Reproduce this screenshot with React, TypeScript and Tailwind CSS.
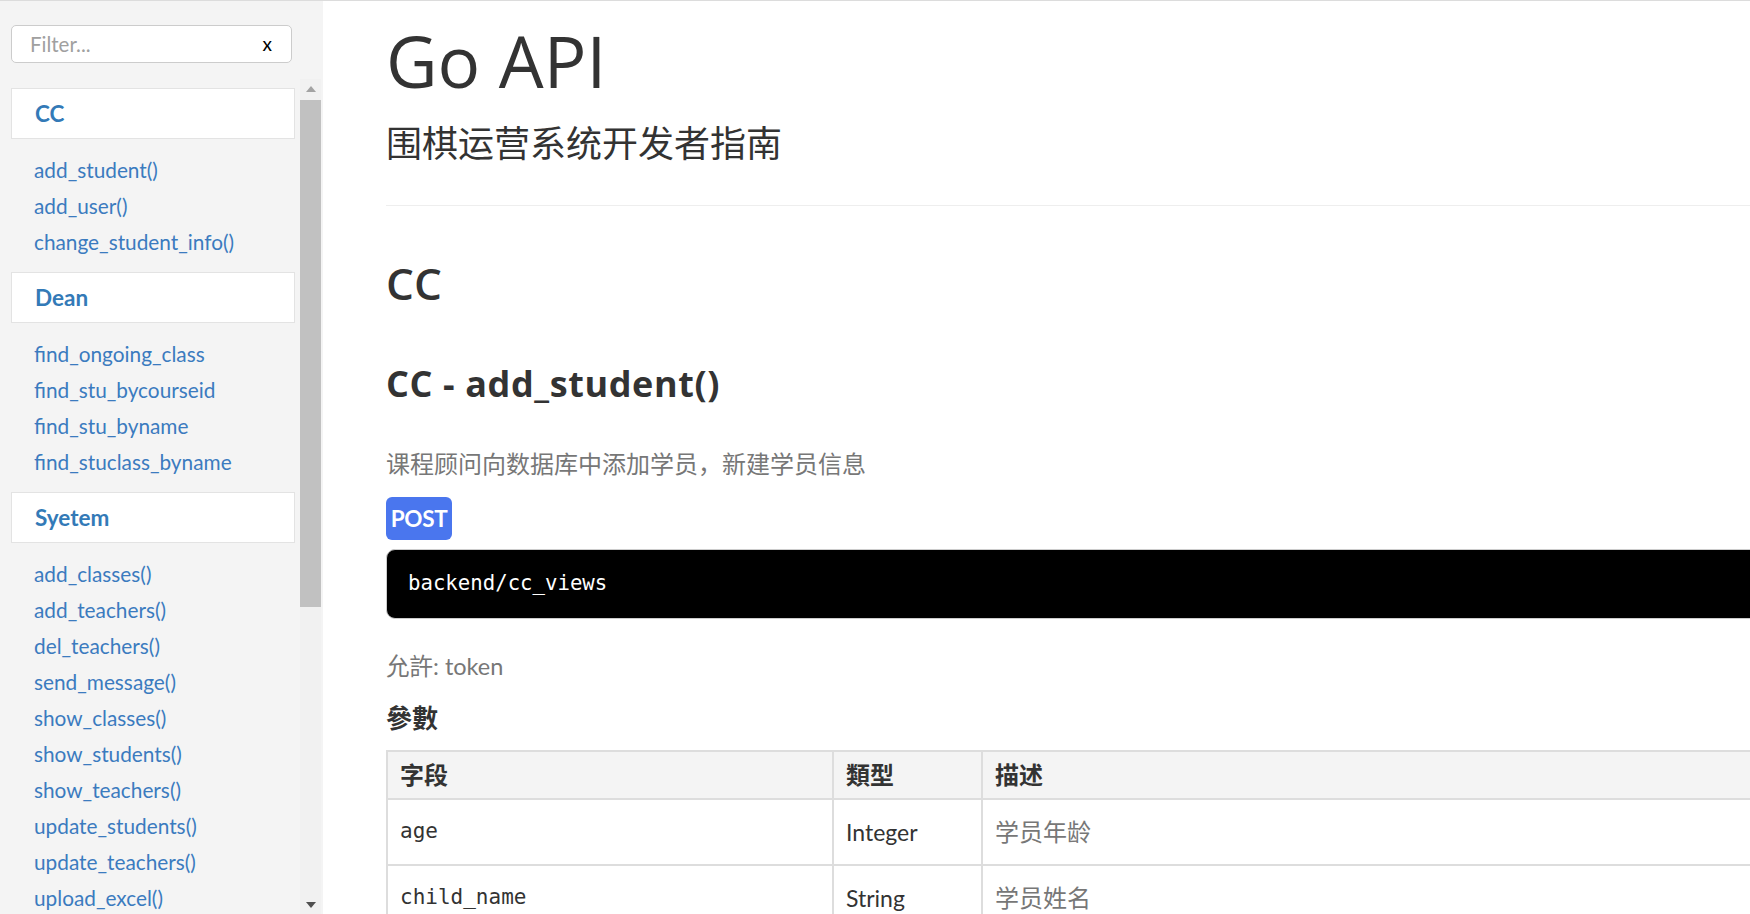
import React from "react";

const sans = "font-['Lato','Noto_Sans_CJK_SC',sans-serif]";
const head = "font-['Open_Sans','Noto_Sans_CJK_SC',sans-serif]";
const mono = "font-['DejaVu_Sans_Mono','Liberation_Mono',monospace]";

const groups = [
  { name: "CC", items: ["add_student()", "add_user()", "change_student_info()"] },
  {
    name: "Dean",
    items: ["find_ongoing_class", "find_stu_bycourseid", "find_stu_byname", "find_stuclass_byname"],
  },
  {
    name: "Syetem",
    items: [
      "add_classes()",
      "add_teachers()",
      "del_teachers()",
      "send_message()",
      "show_classes()",
      "show_students()",
      "show_teachers()",
      "update_students()",
      "update_teachers()",
      "upload_excel()",
    ],
  },
];

const params = [
  { field: "age", type: "Integer", desc: "学员年龄" },
  { field: "child_name", type: "String", desc: "学员姓名" },
];

function Sidebar() {
  return (
    <aside className={`flex w-[323px] shrink-0 flex-col bg-[#f4f4f4] ${sans}`}>
      <div className="ml-[11px] mt-[24px] flex h-[38px] w-[281px] items-center justify-between rounded-[5px] border border-[#ccc] bg-white pl-[18px] pr-[19px]">
        <span className="text-[20.5px] text-[#a0a0a0]">Filter...</span>
        <span className="text-[19px] text-black">x</span>
      </div>
      <div className="mt-[16px] flex min-h-0 flex-1">
        <div className="ml-[11px] w-[284px] pt-[9px]">
          {groups.map((g) => (
            <div key={g.name}>
              <div className="flex h-[51px] items-center border border-[#e3e3e3] bg-white pl-[23px] text-[22.5px] font-bold text-[#337ab7]">
                {g.name}
              </div>
              <ul className="pb-[12px] pt-[13px]">
                {g.items.map((it) => (
                  <li key={it} className="pl-[23px] text-[20.8px] leading-[36px] text-[#3b7bbf]">
                    {it}
                  </li>
                ))}
              </ul>
            </div>
          ))}
        </div>
        {/* scrollbar */}
        <div className="ml-[5px] flex w-[21px] flex-col items-center bg-[#f1f1f1]">
          <svg width="10" height="6" viewBox="0 0 10 6" className="mt-[7px]">
            <path d="M0 6 L5 0 L10 6 Z" fill="#a3a3a3" />
          </svg>
          <div className="mt-[8px] h-[507px] w-full bg-[#c1c1c1]" />
          <div className="flex-1" />
          <svg width="10" height="6" viewBox="0 0 10 6" className="mb-[6px]">
            <path d="M0 0 L10 0 L5 6 Z" fill="#505050" />
          </svg>
        </div>
      </div>
    </aside>
  );
}

function Main() {
  return (
    <main className="min-w-0 flex-1 overflow-hidden bg-white pl-[63px]">
      <div className="w-[1500px] pt-[20px] text-[#333]">
        <h1 className={`${head} text-[71px] leading-[80px]`}>Go API</h1>
        <p className={`${head} mt-[21px] text-[36px] leading-[44px]`}>围棋运营系统开发者指南</p>
        <hr className="mt-[39px] border-t border-[#eee]" />
        <h2 className={`${head} mt-[51px] text-[44px] font-semibold leading-[52px]`}>CC</h2>
        <h3 className={`${head} mt-[53px] text-[36px] font-bold leading-[44px] tracking-[0.6px]`}>
          CC - add_student()
        </h3>
        <p className={`${head} mt-[42px] text-[24px] leading-[32px] text-[#777]`}>
          课程顾问向数据库中添加学员，新建学员信息
        </p>
        <div
          className={`${sans} mt-[17px] flex h-[43px] w-[66px] items-center justify-center rounded-[6px] bg-[#4a76ee] text-[22.5px] font-bold tracking-[-0.3px] text-white`}
        >
          POST
        </div>
        <div className="mt-[9px] flex h-[70px] items-center rounded-[9px] border border-[#ccc] bg-black pl-[21px]">
          <span className={`${mono} text-[20.7px] text-white`}>backend/cc_views</span>
        </div>
        <p className={`${sans} mt-[32px] text-[23.5px] leading-[30px] text-[#777]`}>允許: token</p>
        <h4 className={`${sans} mt-[21px] text-[26px] font-bold leading-[32px]`}>參數</h4>
        <table className={`${sans} mt-[16px] w-full border-collapse border-2 border-[#ddd]`}>
          <thead>
            <tr className="h-[48px] bg-[#f4f4f4]">
              <th className="w-[446px] border-2 border-[#ddd] pl-[12px] text-left text-[24px] font-bold">字段</th>
              <th className="w-[149px] border-2 border-[#ddd] pl-[12px] text-left text-[24px] font-bold">類型</th>
              <th className="border-2 border-[#ddd] pl-[12px] text-left text-[24px] font-bold">描述</th>
            </tr>
          </thead>
          <tbody>
            {params.map((p) => (
              <tr key={p.field} className="h-[66px]">
                <td className={`${mono} border-2 border-[#ddd] pl-[12px] text-[21px]`}>{p.field}</td>
                <td className="border-2 border-[#ddd] pl-[12px] text-[23px]">{p.type}</td>
                <td className="border-2 border-[#ddd] pl-[12px] text-[24px] text-[#777]">{p.desc}</td>
              </tr>
            ))}
          </tbody>
        </table>
      </div>
    </main>
  );
}

export default function App() {
  return (
    <div className="flex h-[914px] w-[1750px] overflow-hidden border-t border-[#dcdcdc]">
      <Sidebar />
      <Main />
    </div>
  );
}
